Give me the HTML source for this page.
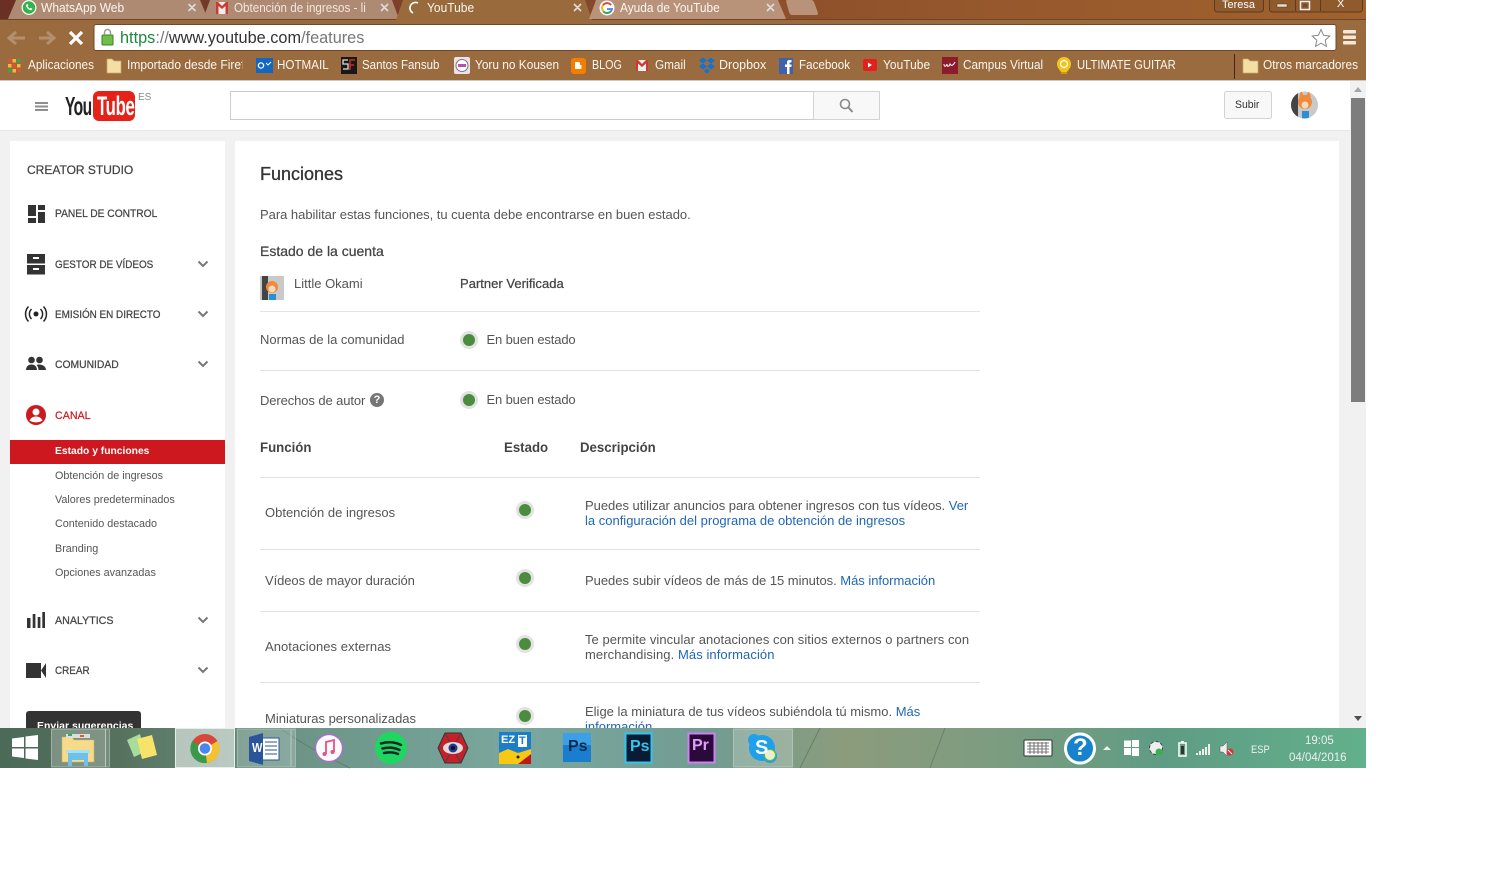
<!DOCTYPE html>
<html><head><meta charset="utf-8"><title>YouTube</title>
<style>
html,body{margin:0;padding:0;background:#fff}
#r{position:relative;width:1486px;height:878px;overflow:hidden;background:#fff;font-family:"Liberation Sans",sans-serif}
.a,.t{position:absolute}
.t{white-space:nowrap;color:#555;font-size:13px;line-height:16px;transform-origin:0 50%}
.c{color:#fbf6f0;font-size:12.5px}
.n{color:#444;font-size:11px;-webkit-text-stroke:.25px #444}
.s{color:#555;font-size:10.8px}
.h{background:#e3e3e3;height:1px;left:260px;width:720px}
.b{color:#1f66b8}
.d{position:absolute;width:12px;height:12px;border-radius:50%;background:#4c8c3f;border:3px solid #e2e2e2}
.m{-webkit-text-stroke:.25px #444;color:#444}
svg{position:absolute;overflow:visible}
</style></head><body><div id="r">

<!-- page -->
<div class="a" style="left:0;top:80px;width:1366px;height:648px;background:#f1f1f1"></div>
<div class="a" style="left:0;top:81px;width:1350px;height:49px;background:#fff;border-bottom:1px solid #e8e8e8"></div>
<div class="a" style="left:10px;top:141px;width:215px;height:600px;background:#fff"></div>
<div class="a" style="left:235px;top:141px;width:1104px;height:600px;background:#fff"></div>

<!-- browser frame -->
<svg style="left:0;top:0" width="1366" height="81">
<defs>
<linearGradient id="fr" x1="0" x2="1"><stop offset="0" stop-color="#6a3026"/><stop offset=".5" stop-color="#8a4c2a"/><stop offset=".75" stop-color="#97592c"/><stop offset="1" stop-color="#a0622e"/></linearGradient>
</defs>
<rect width="1366" height="20" fill="url(#fr)"/>
<rect y="20" width="1366" height="60" fill="#9a6b3e"/>
<rect y="80" width="1366" height="1" fill="#c8c8c8"/>
<rect y="19" width="1366" height="1" fill="#6f4526"/>
<path d="M8 19 L16 0 H200 L208 19Z" fill="#ae8a72"/>
<path d="M203 19 L210 0 H392 L399 19Z" fill="#ae8a72"/>
<path d="M396 20 L403 0 H585 L592 20Z" fill="#996a3c"/>
<path d="M589 19 L596 0 H778 L786 19Z" fill="#b8937a"/>
<path d="M792 15 Q790 15 789 12 L786 1 Q786 0 788 0 H811 Q813 0 814 2 L818 13 Q818 15 816 15Z" fill="#b8937a"/>
<rect x="1214.500" y="-4" width="49" height="16" rx="3" fill="#8f5a2c" stroke="#5e3a1e"/>
<rect x="1269.500" y="-4" width="93" height="16" rx="3" fill="#8f5a2c" stroke="#5e3a1e"/>
<path d="M1295.500 0V11M1320.500 0V11" stroke="#5e3a1e"/>
<rect x="1277" y="4" width="10" height="3" fill="#e8ddd0" stroke="#5e3a1e" stroke-width=".5"/>
<rect x="1300.500" y="1.500" width="9" height="8" fill="none" stroke="#eee" stroke-width="1.500"/><rect x="1303" y="4" width="4" height="3" fill="#7a4a26"/>
<rect x="94" y="24.500" width="1242" height="26" rx="2" fill="#fff" stroke="#6f4a28"/>
<path d="M16 32 L9 38 L16 44 M9 38 H25" fill="none" stroke="#b58f6c" stroke-width="3"/>
<path d="M47 32 L54 38 L47 44 M54 38 H39" fill="none" stroke="#b58f6c" stroke-width="3"/>
<path d="M70 32 L82 44 M82 32 L70 44" stroke="#fff" stroke-width="3.200"/>
<rect x="102" y="35" width="11" height="10" rx="1" fill="#6fbe4a" stroke="#3d7d28"/>
<path d="M104.500 35 V32.500 a3 3 0 0 1 6 0 V35" fill="none" stroke="#999" stroke-width="1.500"/>
<path d="M1321 29.500 l2.600 5.800 6.200.7-4.600 4.200 1.300 6.200-5.500-3.200-5.500 3.200 1.300-6.200-4.600-4.200 6.200-.7z" fill="#fff" stroke="#8a8a8a"/>
<rect x="1343" y="30" width="13" height="3.500" rx="1" fill="#f2e8da"/><rect x="1343" y="35.500" width="13" height="3.500" rx="1" fill="#f2e8da"/><rect x="1343" y="41" width="13" height="3.500" rx="1" fill="#f2e8da"/>
<rect x="1234" y="54" width="1" height="25" fill="#3f2a18"/>

<!-- tab icons -->
<circle cx="29" cy="7.500" r="7.500" fill="#fff"/><circle cx="29" cy="7.500" r="6.200" fill="#2fb54b"/><path d="M26.500 4.500c-1 1 0 4 3 5.500 1.500.6 2.500 0 3-1l-1.800-1.200-1 .7c-1-.5-1.500-1.200-2-2.200l.7-.8-.9-1.700z" fill="#fff"/>
<rect x="216" y="2" width="12" height="12" fill="#eee"/><path d="M216 2 V14 H218.500 V6 L222 9 L225.500 6 V14 H228 V2 H226 L222 6 L218 2Z" fill="#cf3a30"/>
<path d="M418 3 A5.500 5.500 0 0 0 413 13" fill="none" stroke="#fff" stroke-width="1.600"/>
<circle cx="607" cy="8" r="7.500" fill="#fff"/><path d="M612 4.500A5.500 5.500 0 0 0 603 4.500L601.800 6.500 604 8Z" fill="#ea4335" fill-opacity="0"/><path d="M611 5A5 5 0 1 0 612 9H607" fill="none" stroke="#4285f4" stroke-width="1.800"/><path d="M611 5A5 5 0 0 0 603.200 5" fill="none" stroke="#ea4335" stroke-width="1.800"/><path d="M603.200 5A5 5 0 0 0 603.500 11.500" fill="none" stroke="#fbbc05" stroke-width="1.800"/><path d="M603.500 11.500A5 5 0 0 0 611 11" fill="none" stroke="#34a853" stroke-width="1.800"/>
<path d="M188.500 4 l7 7 m0-7 l-7 7 M381 4 l7 7 m0-7 l-7 7 M574 4 l7 7 m0-7 l-7 7 M767 4 l7 7 m0-7 l-7 7" stroke="#ddd" stroke-width="1.600"/>

<!-- bookmark icons -->
<rect x="8" y="59" width="3.500" height="3.500" fill="#e84c3c"/><rect x="12.500" y="59" width="3.500" height="3.500" fill="#f7b731"/><rect x="17" y="59" width="3.500" height="3.500" fill="#2fa84f"/><rect x="8" y="64" width="3.500" height="3.500" fill="#f7b731"/><rect x="12.500" y="64" width="3.500" height="3.500" fill="#e84c3c"/><rect x="17" y="64" width="3.500" height="3.500" fill="#f7b731"/><rect x="8" y="69" width="3.500" height="3.500" fill="#2fa84f"/><rect x="12.500" y="69" width="3.500" height="3.500" fill="#f7b731"/><rect x="17" y="69" width="3.500" height="3.500" fill="#e84c3c"/>
<path d="M107 59 h5 l2 2 h7 v12 h-14z" fill="#f3dfa6" stroke="#c9a76a" stroke-width=".7"/>
<rect x="256" y="58" width="17" height="15" fill="#1467c0"/><circle cx="261" cy="65.500" r="2.600" fill="none" stroke="#fff" stroke-width="1.300"/><path d="M266 63 l2 2 l3-3" stroke="#fff" fill="none"/>
<rect x="341" y="57" width="16" height="17" fill="#181818"/><path d="M348 60h-5v4h5v5h-5" fill="none" stroke="#ddd" stroke-width="1.300"/><path d="M350 70V60h5M350 65h4" fill="none" stroke="#c93020" stroke-width="1.500"/>
<rect x="454" y="57" width="16" height="17" rx="2" fill="#f0e0ea"/><circle cx="462" cy="65.500" r="6" fill="#fff" stroke="#777"/><rect x="458" y="64" width="8" height="3" fill="#b74fb0"/>
<rect x="571" y="58" width="15" height="16" rx="3" fill="#f57d00"/><path d="M575 62h3.500a1.500 1.500 0 0 1 1.500 2v1h1.500v3a1 1 0 0 1-1 1h-5.500z" fill="#fff"/>
<rect x="636" y="60" width="12" height="11" fill="#eee"/><path d="M636 60 V71 H638 V63.500 L642 67 L646 63.500 V71 H648 V60 H646 L642 64 L638 60Z" fill="#cf3a30"/>
<path d="M702 58 l4 3 -4 3 -4-3z M710 58 l4 3 -4 3 -4-3z M702 64 l4 3 -4 3 -4-3z M710 64 l4 3 -4 3 -4-3z M706 69 l3 2.500 -3 2.500 -3-2.500z" fill="#1173d4" transform="translate(1 -.5)"/>
<rect x="779" y="58" width="14" height="16" fill="#3f62a8"/><path d="M787 74v-7h-2v-2.500h2v-2c0-2 1-2.500 3-2.500h1.500v2.500h-1c-1 0-1 .3-1 1v1h2.200l-.4 2.500h-1.800v7z" fill="#fff"/>
<rect x="863" y="59" width="14" height="12" rx="2" fill="#e4201c"/><path d="M868 62.500 l4 2.500 -4 2.500z" fill="#fff"/>
<rect x="942" y="57" width="16" height="17" fill="#8c1c2b"/><path d="M944 64c0 3 2 3 3 0c0 3 2 3 3 0c1 2 3 2 5-2" fill="none" stroke="#fff" stroke-width="1"/>
<path d="M1064 57 a7 7 0 0 1 7 7 c0 4-3 6-4 8 h-6 c-1-2-4-4-4-8 a7 7 0 0 1 7-7z" fill="#f2c51d"/><circle cx="1064" cy="64" r="3.500" fill="none" stroke="#fff" stroke-width="1.200"/><rect x="1061" y="72" width="6" height="2" fill="#c99a10"/>
<path d="M1243 59 h5 l2 2 h8 v12 h-15z" fill="#f3dfa6" stroke="#c9a76a" stroke-width=".7"/>
</svg>

<span class="t c" style="left:41px;top:0;transform:scaleX(.96)">WhatsApp Web</span>
<span class="t c" style="left:234px;top:0;width:150px;overflow:hidden;transform:scaleX(.93);color:#f2e8de">Obtención de ingresos - li</span>
<span class="t c" style="left:427px;top:0;transform:scaleX(.96)">YouTube</span>
<span class="t c" style="left:620px;top:0;transform:scaleX(.95)">Ayuda de YouTube</span>
<span class="t" style="left:1222px;top:-3px;color:#fff;font-size:11px">Teresa</span>
<span class="t" style="left:1337px;top:-4px;color:#fff;font-size:11px">X</span>
<span class="t" style="left:120px;top:28px;font-size:16.300px;line-height:20px;color:#777"><span style="color:#1c8a3c">https</span>://<span style="color:#333">www.youtube.com</span>/features</span>
<span class="t c" style="left:28px;top:57px;transform:scaleX(.94)">Aplicaciones</span>
<span class="t c" style="left:127px;top:57px;width:120px;overflow:hidden;transform:scaleX(.96)">Importado desde Firef</span>
<span class="t c" style="left:277px;top:57px;transform:scaleX(.93)">HOTMAIL</span>
<span class="t c" style="left:362px;top:57px;transform:scaleX(.92)">Santos Fansub</span>
<span class="t c" style="left:475px;top:57px;transform:scaleX(.95)">Yoru no Kousen</span>
<span class="t c" style="left:592px;top:57px;transform:scaleX(.86)">BLOG</span>
<span class="t c" style="left:655px;top:57px;transform:scaleX(.94)">Gmail</span>
<span class="t c" style="left:719px;top:57px">Dropbox</span>
<span class="t c" style="left:799px;top:57px;transform:scaleX(.93)">Facebook</span>
<span class="t c" style="left:883px;top:57px;transform:scaleX(.96)">YouTube</span>
<span class="t c" style="left:963px;top:57px;transform:scaleX(.94)">Campus Virtual</span>
<span class="t c" style="left:1077px;top:57px;transform:scaleX(.9)">ULTIMATE GUITAR</span>
<span class="t c" style="left:1263px;top:57px;transform:scaleX(.95)">Otros marcadores</span>

<!-- masthead -->
<svg style="left:0;top:81px" width="1366" height="50">
<rect x="35" y="21" width="13" height="2" fill="#8e8e8e"/><rect x="35" y="24.500" width="13" height="2" fill="#8e8e8e"/><rect x="35" y="28" width="13" height="2" fill="#8e8e8e"/>
<rect x="93" y="10" width="42" height="30" rx="6" fill="#e62117"/>
<rect x="230.500" y="10.500" width="583" height="28" fill="#fff" stroke="#ccc"/>
<rect x="813.500" y="10.500" width="66" height="28" fill="#f8f8f8" stroke="#d3d3d3"/>
<circle cx="845" cy="23" r="4.500" fill="none" stroke="#8a8a8a" stroke-width="1.600"/><path d="M848.500 26.500 L852.500 31" stroke="#8a8a8a" stroke-width="2"/>
<rect x="1224.500" y="10.500" width="47" height="27" rx="2" fill="#f8f8f8" stroke="#d3d3d3"/>
<clipPath id="av"><circle cx="1304.500" cy="24" r="13.500"/></clipPath>
<g clip-path="url(#av)"><rect x="1290" y="10" width="30" height="30" fill="#c9c9c9"/><rect x="1291" y="10" width="7" height="30" fill="#444"/><circle cx="1305" cy="21" r="7" fill="#ee8a3c"/><path d="M1299 16l2-6 3 5zM1311 16l-2-6-3 5z" fill="#ee8a3c"/><circle cx="1305" cy="24" r="3.500" fill="#f6d9b8"/><rect x="1302" y="30" width="7" height="8" fill="#2a8fd8"/></g>
</svg>
<span class="t" style="left:65px;top:91px;font-size:26px;line-height:30px;color:#222;transform:scaleX(.6);transform-origin:0 0;font-weight:700;letter-spacing:-1px">You</span>
<span class="t" style="left:97px;top:91px;font-size:27px;line-height:30px;color:#fff;transform:scaleX(.62);transform-origin:0 0;font-weight:700;letter-spacing:-.5px">Tube</span>
<span class="t" style="left:138px;top:90px;font-size:10px;color:#888">ES</span>
<span class="t" style="left:1235px;top:97px;font-size:11px;color:#333;transform:scaleX(.95)">Subir</span>

<!-- sidebar -->
<svg style="left:0;top:141px" width="235" height="600" fill="#333">
<rect x="28" y="64" width="8" height="11"/><rect x="38" y="64" width="7" height="5"/><rect x="38" y="71" width="7" height="11"/><rect x="28" y="77" width="8" height="5"/>
<path d="M27 113h18v9.500H27zM27 124h18v9.500H27z"/><rect x="33" y="116" width="6" height="2" fill="#fff"/><rect x="33" y="127" width="6" height="2" fill="#fff"/>
<circle cx="36" cy="173" r="2.500" fill="#222"/>
<path d="M31.500 168a7 7 0 0 0 0 10M40.500 168a7 7 0 0 1 0 10M28.500 165.500a11 11 0 0 0 0 15M43.500 165.500a11 11 0 0 1 0 15" fill="none" stroke="#222" stroke-width="1.500"/>
<circle cx="31.500" cy="219" r="3.300"/><circle cx="39.500" cy="219" r="3.300"/><path d="M26 229c0-4 3-5.500 5.500-5.500s5.500 1.500 5.500 5.500zM38.500 229c0-2-.5-3.500-2-5 3-1.500 9.500 0 9.500 5z"/>
<circle cx="36" cy="274" r="10" fill="#cc181e"/><circle cx="36" cy="271" r="3.500" fill="#fff"/><path d="M29.500 279.500c1.500-3 4-4 6.500-4s5 1 6.500 4c-3.500 2.500-9.500 2.500-13 0z" fill="#fff"/>
<rect x="10" y="299" width="215" height="24" fill="#cc181e"/>
<path d="M27 477h3.500v10H27zM32.700 473h2.700v14h-2.700zM37.700 476h2.700v11h-2.700zM42.300 471H45v16h-2.700z"/>
<path d="M26 522h15v15H26zM46 522v15l-5-7.500z"/>
<path d="M198.500 120.500l4.500 4.500 4.500-4.500M198.500 170.500l4.500 4.500 4.500-4.500M198.500 220.500l4.500 4.500 4.500-4.500M198.500 476.500l4.500 4.500 4.500-4.500M198.500 526.500l4.500 4.500 4.500-4.500" fill="none" stroke="#777" stroke-width="2"/>
<path d="M26 573 a3 3 0 0 1 3-3 H138 a3 3 0 0 1 3 3 V600 H26z" fill="#333"/>
</svg>
<span class="t m" style="left:27px;top:162px;font-size:12px">CREATOR STUDIO</span>
<span class="t n" style="left:55px;top:206px;transform:scaleX(.93)">PANEL DE CONTROL</span>
<span class="t n" style="left:55px;top:257px;transform:scaleX(.9)">GESTOR DE VÍDEOS</span>
<span class="t n" style="left:55px;top:307px;transform:scaleX(.9)">EMISIÓN EN DIRECTO</span>
<span class="t n" style="left:55px;top:357px;transform:scaleX(.94)">COMUNIDAD</span>
<span class="t n" style="left:55px;top:408px;color:#cc181e;-webkit-text-stroke:.2px #cc181e;transform:scaleX(.97)">CANAL</span>
<span class="t s" style="left:55px;top:444px;color:#fff;font-weight:700;font-size:10.300px">Estado y funciones</span>
<span class="t s" style="left:55px;top:468px">Obtención de ingresos</span>
<span class="t s" style="left:55px;top:492px">Valores predeterminados</span>
<span class="t s" style="left:55px;top:516px">Contenido destacado</span>
<span class="t s" style="left:55px;top:541px">Branding</span>
<span class="t s" style="left:55px;top:565px">Opciones avanzadas</span>
<span class="t n" style="left:55px;top:613px;transform:scaleX(.97)">ANALYTICS</span>
<span class="t n" style="left:55px;top:663px;transform:scaleX(.9)">CREAR</span>
<span class="t" style="left:37px;top:718px;font-size:10.500px;color:#fff;font-weight:700">Enviar sugerencias</span>

<!-- main -->
<span class="t" style="left:260px;top:163px;font-size:18px;line-height:22px;color:#333;-webkit-text-stroke:.3px #333">Funciones</span>
<span class="t" style="left:260px;top:207px;letter-spacing:-.03px">Para habilitar estas funciones, tu cuenta debe encontrarse en buen estado.</span>
<span class="t m" style="left:260px;top:243px;font-size:14px">Estado de la cuenta</span>
<svg style="left:260px;top:276px" width="24" height="24"><rect width="24" height="24" fill="#c9c9c9"/><rect x="2" width="6" height="24" fill="#444"/><circle cx="12" cy="11" r="6" fill="#ee8a3c"/><circle cx="12" cy="13" r="3.500" fill="#f6d9b8"/><rect x="9" y="18" width="7" height="6" fill="#2a8fd8"/></svg>
<span class="t" style="left:294px;top:276px">Little Okami</span>
<span class="t m" style="left:460px;top:276px;letter-spacing:.02px">Partner Verificada</span>
<div class="a h" style="top:311px"></div>
<span class="t" style="left:260px;top:332px">Normas de la comunidad</span>
<div class="d" style="left:460px;top:331px"></div>
<span class="t" style="left:486.500px;top:332px;letter-spacing:-.15px">En buen estado</span>
<div class="a h" style="top:370px"></div>
<span class="t" style="left:260px;top:393px;letter-spacing:-.1px">Derechos de autor</span>
<div class="a" style="left:370px;top:393px;width:14px;height:14px;border-radius:50%;background:#767676;color:#fff;font-size:11px;line-height:14px;text-align:center;font-weight:700">?</div>
<div class="d" style="left:460px;top:391px"></div>
<span class="t" style="left:486.500px;top:392px;letter-spacing:-.15px">En buen estado</span>

<span class="t" style="left:260px;top:440px;font-size:13.500px;color:#444;font-weight:700;transform:scaleX(.98)">Función</span>
<span class="t" style="left:503.500px;top:440px;font-size:13.500px;color:#444;font-weight:700;transform:scaleX(.98)">Estado</span>
<span class="t" style="left:580px;top:440px;font-size:13.500px;color:#444;font-weight:700;transform:scaleX(.98)">Descripción</span>
<div class="a h" style="top:477px"></div>

<span class="t" style="left:265px;top:505px">Obtención de ingresos</span>
<div class="d" style="left:516px;top:501px"></div>
<span class="t" style="left:585px;top:498px;letter-spacing:-.03px">Puedes utilizar anuncios para obtener ingresos con tus vídeos. <span class="b">Ver</span></span>
<span class="t b" style="left:585px;top:513px">la configuración del programa de obtención de ingresos</span>
<div class="a h" style="top:549px"></div>

<span class="t" style="left:265px;top:573px;letter-spacing:-.08px">Vídeos de mayor duración</span>
<div class="d" style="left:516px;top:569px"></div>
<span class="t" style="left:585px;top:573px;letter-spacing:-.03px">Puedes subir vídeos de más de 15 minutos. <span class="b">Más información</span></span>
<div class="a h" style="top:611px"></div>

<span class="t" style="left:265px;top:639px;letter-spacing:.05px">Anotaciones externas</span>
<div class="d" style="left:516px;top:635px"></div>
<span class="t" style="left:585px;top:632px;letter-spacing:.05px">Te permite vincular anotaciones con sitios externos o partners con</span>
<span class="t" style="left:585px;top:647px;letter-spacing:.08px">merchandising. <span class="b">Más información</span></span>
<div class="a h" style="top:682px"></div>

<span class="t" style="left:265px;top:711px">Miniaturas personalizadas</span>
<div class="d" style="left:516px;top:707px"></div>
<span class="t" style="left:585px;top:704px">Elige la miniatura de tus vídeos subiéndola tú mismo. <span class="b">Más</span></span>
<span class="t b" style="left:585px;top:719px">información</span>

<!-- scrollbar -->
<svg style="left:1350px;top:81px" width="16" height="647">
<rect width="16" height="647" fill="#f1f1f1"/>
<rect x="1" y="17" width="14" height="304" fill="#7d7d7d"/>
<path d="M4 11 L8 6 L12 11Z" fill="#a6a6a6"/>
<path d="M4 635 L12 635 L8 640Z" fill="#505050"/>
</svg>

<!-- taskbar -->
<svg style="left:0;top:728px" width="1366" height="40">
<defs>
<linearGradient id="tk" x1="0" x2="1"><stop offset="0" stop-color="#4b6a58"/><stop offset=".08" stop-color="#55705c"/><stop offset=".2" stop-color="#6b9284"/><stop offset=".38" stop-color="#7aa79e"/><stop offset=".52" stop-color="#729c92"/><stop offset=".62" stop-color="#8b9c7c"/><stop offset=".72" stop-color="#7f9c80"/><stop offset=".85" stop-color="#5f9c84"/><stop offset="1" stop-color="#62b08c"/></linearGradient>
</defs>
<rect width="1366" height="40" fill="url(#tk)"/>
<path d="M820 0 L800 40M945 0 L930 40M280 0 C 300 15 320 25 350 40" stroke="#55705f" stroke-opacity=".6" stroke-width="1" fill="none"/>
<!-- win -->
<path d="M12 10.500 L24 9 V19 H12z M25.500 8.500 L38 7 V19 H25.500z M12 20.500 H24 V30 L12 28.500z M25.500 20.500 H38 V32 L25.500 30.500z" fill="#fff"/>
<!-- buttons -->
<rect x="51.500" y="1" width="54" height="38" fill="#fff" fill-opacity=".25" stroke="#c8d5cf" stroke-opacity=".6"/>
<rect x="105.500" y="1" width="4" height="38" fill="#fff" fill-opacity=".2" stroke="#c8d5cf" stroke-opacity=".5"/>
<rect x="175.500" y=".5" width="59" height="39" fill="#fff" fill-opacity=".55" stroke="#e8eee8"/>
<rect x="237.500" y="1" width="53" height="38" fill="#fff" fill-opacity=".2" stroke="#c8d5cf" stroke-opacity=".5"/>
<rect x="291.500" y="1" width="4" height="38" fill="#fff" fill-opacity=".2" stroke="#c8d5cf" stroke-opacity=".5"/>
<rect x="733.500" y="1" width="59" height="38" fill="#fff" fill-opacity=".22" stroke="#c8d5cf" stroke-opacity=".6"/>
<!-- explorer -->
<path d="M62 9h10l2 3h20v22H62z" fill="#f6dc8a" stroke="#d0b060" stroke-width=".6"/>
<rect x="66" y="6" width="24" height="4" fill="#ddd"/><rect x="68" y="6" width="4" height="2" fill="#2fb050"/><rect x="80" y="7" width="4" height="2" fill="#e05a30"/>
<path d="M68 24h20v14h-4v-6h-12v6h-4z" fill="#6fc0e8"/><rect x="66" y="22" width="24" height="3" fill="#a5e0f5"/>
<!-- sticky -->
<path d="M127 12l13-6 5 18-11 5z" fill="#a8dc9a"/><path d="M137 11l15-4 5 20-15 4z" fill="#f8e36a"/>
<!-- chrome -->
<circle cx="205" cy="20.500" r="14.500" fill="#d7473a"/><path d="M205 20.500 L217.500 28 A14.500 14.500 0 0 1 203 35Z" fill="#3a9a4a"/><path d="M217.500 13 A14.500 14.500 0 0 1 207 35 L205 20.500Z" fill="#f2c230"/><path d="M205 20.500 L203 35 A14.500 14.500 0 0 1 192.500 13Z" fill="#3a9a4a"/><circle cx="205" cy="20.500" r="7" fill="#fff"/><circle cx="205" cy="20.500" r="5.300" fill="#4a87ea"/>
<!-- word -->
<rect x="260" y="10" width="19" height="22" fill="#fff" stroke="#2a5699"/><path d="M249 9l14-4v32l-14-4z" fill="#2a5699"/><path d="M265 14h12M265 18h12M265 22h12M265 26h12" stroke="#2a5699"/>
<!-- itunes -->
<circle cx="329" cy="20" r="13.500" fill="#fbfbfb" stroke="#b06ad8" stroke-width="1.300"/><path d="M326 26V14l8-2v12" fill="none" stroke="#e8508a" stroke-width="1.800"/><circle cx="324.500" cy="26" r="2" fill="#e8508a"/><circle cx="332.500" cy="24" r="2" fill="#e8508a"/>
<!-- spotify -->
<circle cx="391" cy="20" r="16" fill="#1ed760"/><path d="M381 15.500c7-2 14-1.500 20 1.500M382.500 20.500c6-1.500 12-1 17 1.500M384 25c5-1 10-1 14 1" fill="none" stroke="#15292a" stroke-width="2.500" stroke-linecap="round"/>
<!-- eye -->
<path d="M445 5h16l7 15-7 15h-16l-7-15z" fill="#c8202a" stroke="#333"/><path d="M445 5l16 30M461 5l-16 30M438 20h30" stroke="#444"/><ellipse cx="453" cy="20" rx="10" ry="6" fill="#e8d8d8"/><circle cx="453" cy="20" r="4.500" fill="#1c3a9a"/><circle cx="453" cy="20" r="2" fill="#111"/>
<!-- ezt -->
<rect x="499" y="4" width="32" height="32" fill="#1c7ec8"/><rect x="518" y="7" width="9" height="12" fill="#fff"/><path d="M499 25l9-4 10 4 13-4v15H499z" fill="#f7c910"/><path d="M518 36l13-10v10z" fill="#c01818"/><circle cx="518" cy="29" r="1.500" fill="#222"/>
<!-- ps -->
<rect x="563" y="5" width="28" height="29" fill="#1a7ed0"/><rect x="563" y="5" width="28" height="12" fill="#3ba0e8"/>
<rect x="625.500" y="5.500" width="26" height="29" fill="#0a1c33" stroke="#31c5f0" stroke-width="2"/>
<rect x="688.500" y="5.500" width="26" height="29" fill="#2a0a3a" stroke="#d080f0" stroke-width="2"/>
<!-- skype -->
<circle cx="762" cy="20" r="13" fill="#1ea0ea"/><circle cx="754" cy="12" r="6" fill="#1ea0ea"/><circle cx="770" cy="28" r="7" fill="#1ea0ea"/><circle cx="770" cy="27" r="5.500" fill="#e8f0d0" stroke="#6cba30"/>
<!-- tray -->
<rect x="1024" y="12" width="28" height="16" rx="1" fill="#fff" stroke="#333"/><path d="M1027 15h22M1027 18h22M1027 21h22M1027 24h22M1030 14v12M1034 14v12M1038 14v12M1042 14v12M1046 14v12" stroke="#555" stroke-width=".8"/>
<circle cx="1080" cy="20.500" r="14.500" fill="#1783cc" stroke="#fff" stroke-width="3"/>
<path d="M1103 22l4-4 4 4z" fill="#eee"/>
<path d="M1124 12.500h7v6.500h-7zM1132 12h7v7h-7zM1124 20h7v7h-7zM1132 20h7v8h-7z" fill="#fff"/>
<circle cx="1156" cy="20" r="6.500" fill="#eee" stroke="#444" stroke-dasharray="3 2"/><circle cx="1159" cy="24" r="3.500" fill="#3cae4c"/>
<rect x="1179" y="15" width="7" height="13" fill="none" stroke="#fff" stroke-width="1.500"/><rect x="1181" y="13" width="3" height="2" fill="#fff"/><rect x="1181" y="18" width="3" height="8" fill="#333"/>
<path d="M1196 27h2v-2h-2zM1199 27h2v-4h-2zM1202 27h2v-6h-2zM1205 27h2v-8h-2zM1208 27h2v-11h-2z" fill="#eee"/>
<path d="M1220 18h3l4-4v14l-4-4h-3z" fill="#eee" stroke="#555" stroke-width=".5"/><circle cx="1230" cy="24" r="3.500" fill="#e03030"/><path d="M1228 22l4 4" stroke="#fff"/>
</svg>
<span class="t" style="left:501px;top:733px;color:#fff;font-size:11px;font-weight:700;line-height:14px">EZ</span>
<span class="t" style="left:519px;top:734px;color:#1c7ec8;font-size:11px;font-weight:700;line-height:14px">T</span>
<span class="t" style="left:568px;top:738px;color:#0a2a4a;font-size:16px;font-weight:700;line-height:18px">Ps</span>
<span class="t" style="left:630px;top:738px;color:#31c5f0;font-size:16px;font-weight:700;line-height:18px">Ps</span>
<span class="t" style="left:692px;top:737px;color:#e0a0f8;font-size:16px;font-weight:700;line-height:18px">Pr</span>
<span class="t" style="left:252px;top:740px;color:#fff;font-size:13px;font-weight:700;transform:scaleX(.85)">W</span>
<span class="t" style="left:755px;top:737px;color:#fff;font-size:20px;font-weight:700;line-height:22px">S</span>
<span class="t" style="left:1073px;top:733px;color:#fff;font-size:24px;font-weight:700;line-height:30px">?</span>
<span class="t" style="left:1251px;top:742px;color:#eee;font-size:11px;transform:scaleX(.85)">ESP</span>
<span class="t" style="left:1305px;top:733px;color:#eee;font-size:11.500px">19:05</span>
<span class="t" style="left:1289px;top:750px;color:#eee;font-size:11.500px">04/04/2016</span>
</div></body></html>
